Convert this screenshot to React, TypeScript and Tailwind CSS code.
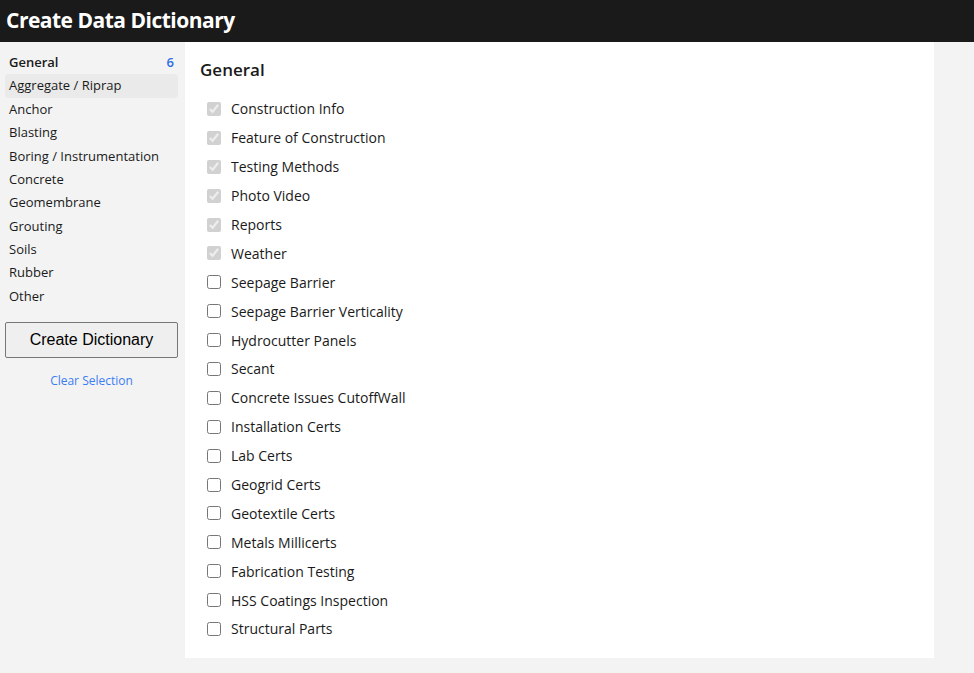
import { useState } from 'react';

const categories = [
  'General',
  'Aggregate / Riprap',
  'Anchor',
  'Blasting',
  'Boring / Instrumentation',
  'Concrete',
  'Geomembrane',
  'Grouting',
  'Soils',
  'Rubber',
  'Other',
];

const items = [
  { label: 'Construction Info', locked: true },
  { label: 'Feature of Construction', locked: true },
  { label: 'Testing Methods', locked: true },
  { label: 'Photo Video', locked: true },
  { label: 'Reports', locked: true },
  { label: 'Weather', locked: true },
  { label: 'Seepage Barrier' },
  { label: 'Seepage Barrier Verticality' },
  { label: 'Hydrocutter Panels' },
  { label: 'Secant' },
  { label: 'Concrete Issues CutoffWall' },
  { label: 'Installation Certs' },
  { label: 'Lab Certs' },
  { label: 'Geogrid Certs' },
  { label: 'Geotextile Certs' },
  { label: 'Metals Millicerts' },
  { label: 'Fabrication Testing' },
  { label: 'HSS Coatings Inspection' },
  { label: 'Structural Parts' },
];

export default function App() {
  const [checked, setChecked] = useState<Record<string, boolean>>({});

  return (
    <div className="min-h-screen bg-[#f3f3f3] font-['Open_Sans',sans-serif] text-[#1a1a1a]">
      <header className="h-[42px] bg-[#1a1a1a] flex items-center px-[6px]">
        <h1 className="text-white text-[21px] font-bold tracking-[-0.5px]">Create Data Dictionary</h1>
      </header>

      <div className="flex">
        {/* Sidebar */}
        <aside className="w-[185px] shrink-0 pl-[5px] pr-[7px] pt-[9px]">
          <ul className="flex flex-col">
            {categories.map((c, i) => (
              <li
                key={c}
                className={`h-[23.4px] flex items-center justify-between px-[4px] rounded text-[13px] ${
                  i === 1 ? 'bg-[#eaeaea]' : ''
                } ${i === 0 ? 'font-semibold' : ''}`}
              >
                <span>{c}</span>
                {i === 0 && <span className="text-[#2f6fe4] text-[13px]">6</span>}
              </li>
            ))}
          </ul>
          <button className="mt-[14px] w-full h-[36px] border border-[#767676] bg-[#efefef] rounded-[2px] font-['Liberation_Sans',sans-serif] text-[16px] text-black">
            Create Dictionary
          </button>
          <div className="mt-[14px] text-center text-[12px] text-[#3b7df5]">Clear Selection</div>
        </aside>

        {/* Main panel */}
        <main className="w-[749px] bg-white pl-[15px] pt-[15px] pb-[15px] mb-[15px]">
          <h2 className="text-[17px] font-semibold mb-[12px]">General</h2>
          <ul className="flex flex-col">
            {items.map((it) => (
              <li key={it.label} className="h-[28.9px] flex items-center pl-[7px]">
                <input
                  type="checkbox"
                  className="w-[14px] h-[14px] m-0 accent-[#d6d6d6]"
                  disabled={it.locked}
                  checked={it.locked ? true : !!checked[it.label]}
                  onChange={() => setChecked({ ...checked, [it.label]: !checked[it.label] })}
                />
                <span className="ml-[10px] text-[14px]">{it.label}</span>
              </li>
            ))}
          </ul>
        </main>
      </div>
    </div>
  );
}
